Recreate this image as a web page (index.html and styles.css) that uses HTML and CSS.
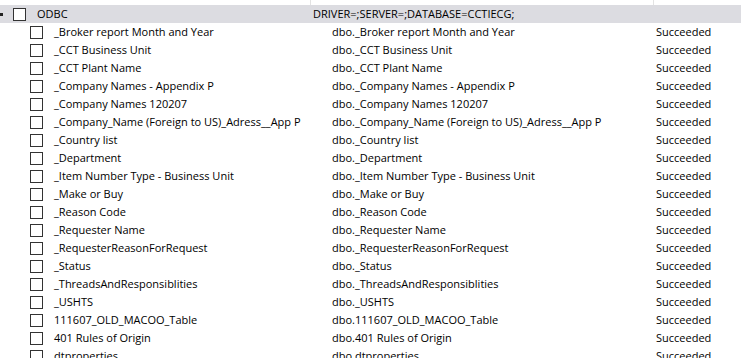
FILE: index.html
```html
<!DOCTYPE html>
<html>
<head>
<meta charset="utf-8">
<link rel="stylesheet" href="styles.css">
</head>
<body>
<div class="tree">
  <div class="row colhead">
    <div class="c1"></div><div class="c2"></div><div class="c3"></div>
  </div>
  <div class="row root">
    <div class="c1"><span class="exp"></span><span class="cb"></span><span class="name">ODBC</span></div>
    <div class="c2">DRIVER=;SERVER=;DATABASE=CCTIECG;</div>
    <div class="c3"></div>
  </div>
  <div class="row child"><div class="c1"><span class="cb"></span><span class="name">_Broker report Month and Year</span></div><div class="c2">dbo._Broker report Month and Year</div><div class="c3">Succeeded</div></div>
  <div class="row child"><div class="c1"><span class="cb"></span><span class="name">_CCT Business Unit</span></div><div class="c2">dbo._CCT Business Unit</div><div class="c3">Succeeded</div></div>
  <div class="row child"><div class="c1"><span class="cb"></span><span class="name">_CCT Plant Name</span></div><div class="c2">dbo._CCT Plant Name</div><div class="c3">Succeeded</div></div>
  <div class="row child"><div class="c1"><span class="cb"></span><span class="name">_Company Names - Appendix P</span></div><div class="c2">dbo._Company Names - Appendix P</div><div class="c3">Succeeded</div></div>
  <div class="row child"><div class="c1"><span class="cb"></span><span class="name">_Company Names 120207</span></div><div class="c2">dbo._Company Names 120207</div><div class="c3">Succeeded</div></div>
  <div class="row child"><div class="c1"><span class="cb"></span><span class="name">_Company_Name (Foreign to US)_Adress__App P</span></div><div class="c2">dbo._Company_Name (Foreign to US)_Adress__App P</div><div class="c3">Succeeded</div></div>
  <div class="row child"><div class="c1"><span class="cb"></span><span class="name">_Country list</span></div><div class="c2">dbo._Country list</div><div class="c3">Succeeded</div></div>
  <div class="row child"><div class="c1"><span class="cb"></span><span class="name">_Department</span></div><div class="c2">dbo._Department</div><div class="c3">Succeeded</div></div>
  <div class="row child"><div class="c1"><span class="cb"></span><span class="name">_Item Number Type - Business Unit</span></div><div class="c2">dbo._Item Number Type - Business Unit</div><div class="c3">Succeeded</div></div>
  <div class="row child"><div class="c1"><span class="cb"></span><span class="name">_Make or Buy</span></div><div class="c2">dbo._Make or Buy</div><div class="c3">Succeeded</div></div>
  <div class="row child"><div class="c1"><span class="cb"></span><span class="name">_Reason Code</span></div><div class="c2">dbo._Reason Code</div><div class="c3">Succeeded</div></div>
  <div class="row child"><div class="c1"><span class="cb"></span><span class="name">_Requester Name</span></div><div class="c2">dbo._Requester Name</div><div class="c3">Succeeded</div></div>
  <div class="row child"><div class="c1"><span class="cb"></span><span class="name">_RequesterReasonForRequest</span></div><div class="c2">dbo._RequesterReasonForRequest</div><div class="c3">Succeeded</div></div>
  <div class="row child"><div class="c1"><span class="cb"></span><span class="name">_Status</span></div><div class="c2">dbo._Status</div><div class="c3">Succeeded</div></div>
  <div class="row child"><div class="c1"><span class="cb"></span><span class="name">_ThreadsAndResponsiblities</span></div><div class="c2">dbo._ThreadsAndResponsiblities</div><div class="c3">Succeeded</div></div>
  <div class="row child"><div class="c1"><span class="cb"></span><span class="name">_USHTS</span></div><div class="c2">dbo._USHTS</div><div class="c3">Succeeded</div></div>
  <div class="row child"><div class="c1"><span class="cb"></span><span class="name">111607_OLD_MACOO_Table</span></div><div class="c2">dbo.111607_OLD_MACOO_Table</div><div class="c3">Succeeded</div></div>
  <div class="row child"><div class="c1"><span class="cb"></span><span class="name">401 Rules of Origin</span></div><div class="c2">dbo.401 Rules of Origin</div><div class="c3">Succeeded</div></div>
  <div class="row child"><div class="c1"><span class="cb"></span><span class="name">dtproperties</span></div><div class="c2">dbo.dtproperties</div><div class="c3">Succeeded</div></div>
</div>
</body>
</html>
```
FILE: styles.css
```css
html, body {
  margin: 0;
  padding: 0;
  background: #ffffff;
  overflow: hidden;
}
body {
  width: 741px;
  height: 358px;
  font-family: "Open Sans", "Noto Sans", sans-serif;
  font-size: 11px;
  color: #000000;
}
.tree {
  display: flex;
  flex-direction: column;
}
.row {
  display: grid;
  grid-template-columns: 311px 343px 87px;
  height: 18px;
  line-height: 18px;
  white-space: nowrap;
}
.row > div {
  overflow: hidden;
}
.colhead {
  height: 5px;
}
.colhead .c1, .colhead .c2 {
  border-right: 1px solid #e3e3e3;
}
.c1 {
  display: flex;
  align-items: center;
}
.root {
  background: #dcdce1;
}
.root .c2 {
  padding-left: 2px;
}
.child .c1 {
  padding-left: 30px;
}
.child .c2 {
  padding-left: 21px;
}
.c3 {
  padding-left: 2px;
}
.exp {
  width: 3px;
  height: 3px;
  background: #222222;
  margin-right: 10px;
  flex: none;
}
.cb {
  width: 13px;
  height: 13px;
  box-sizing: border-box;
  border: 1px solid #333333;
  background: #ffffff;
  flex: none;
  margin-right: 11px;
}
```
